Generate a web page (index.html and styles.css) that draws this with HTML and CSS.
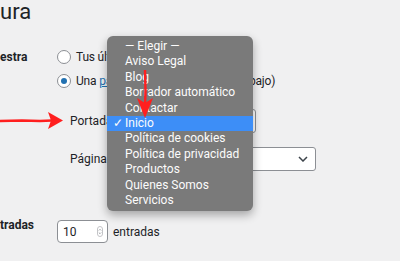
FILE: index.html
```html
<!DOCTYPE html>
<html lang="es">
<head>
  <meta charset="UTF-8" />
  <title>Ajustes de lectura</title>
  <link rel="stylesheet" href="styles.css">
</head>
<body>
  <div class="wrap">
    <h1>ura</h1>
    <div class="form-table">
      <div class="th">estra</div>
      <div class="td">
        <label class="radio-line"><span class="radio"></span>Tus últimas entradas</label>
        <label class="radio-line"><span class="radio checked"></span>Una&nbsp;<a href="#">página estática</a>&nbsp;(selecciona abajo)</label>
        <div class="sub-row">
          <span class="sub-label">Portada</span>
          <div class="select front">— Elegir —</div>
        </div>
        <div class="sub-row">
          <span class="sub-label">Página</span>
          <div class="select posts">
            <span>— Elegir —</span>
            <svg width="10" height="6" viewBox="0 0 10 6"><path d="M1 1l4 4 4-4" fill="none" stroke="#3c434a" stroke-width="1.5"/></svg>
          </div>
        </div>
      </div>
      <div class="th second">tradas</div>
      <div class="td second">
        <div class="number">
          <span>10</span>
          <svg class="spin" width="6" height="11" viewBox="0 0 6 11"><rect x="0.5" y="0.5" width="5" height="10" rx="2.5" fill="none" stroke="#c3c4c7"/><path d="M1.8 4.5l1.2-1.2 1.2 1.2M1.8 6.5l1.2 1.2 1.2-1.2" fill="none" stroke="#8c8f94" stroke-width="0.8"/></svg>
        </div>
        <span class="after">entradas</span>
      </div>
    </div>
  </div>

  <ul class="popup">
    <li>— Elegir —</li>
    <li>Aviso Legal</li>
    <li>Blog</li>
    <li>Borrador automático</li>
    <li>Contactar</li>
    <li class="selected"><span class="check">✓</span>Inicio</li>
    <li>Política de cookies</li>
    <li>Política de privacidad</li>
    <li>Productos</li>
    <li>Quienes Somos</li>
    <li>Servicios</li>
  </ul>

  <!-- flechas dibujadas encima de la captura -->
  <svg class="arrow arrow-left" width="66" height="20" viewBox="0 0 66 20">
    <path d="M0 9 L22 8.5 L40 9 L52 8.5" stroke="#ff1f1f" stroke-width="2.6" fill="none"/>
    <path d="M48 0 L63 8.5 L48 17 L51 8.5 Z" fill="#ff1f1f"/>
  </svg>
  <svg class="arrow arrow-down" width="20" height="52" viewBox="0 0 20 52">
    <path d="M10 0 L10.5 20 L10 38" stroke="#ff1f1f" stroke-width="2.4" fill="none"/>
    <path d="M2 28 L10 48 L18 28 L10 33 Z" fill="#ff1f1f"/>
  </svg>
</body>
</html>
```

FILE: styles.css
```css
body {
  margin: 0;
  background: #f0f0f1;
  color: #1d2327;
  font-family: Roboto, "Noto Sans", sans-serif;
  font-size: 12px;
  overflow: hidden;
}
h1 {
  font-size: 22px;
  font-weight: 400;
  line-height: 28px;
  margin: -2px 0 0 0;
}
.form-table {
  display: grid;
  grid-template-columns: 57px auto;
  margin-top: 19px;
}
.th {
  font-weight: 700;
  font-size: 12px;
  line-height: 24px;
}
.th.second {
  margin-top: 44px;
  line-height: 20px;
}
.td.second {
  margin-top: 49px;
  display: flex;
  align-items: center;
  gap: 5px;
}
.radio-line {
  display: flex;
  align-items: center;
  height: 24px;
  white-space: nowrap;
  letter-spacing: -0.2px;
}
.radio {
  width: 12px;
  height: 12px;
  border: 1px solid #8c8f94;
  border-radius: 50%;
  background: #fff;
  margin-right: 5px;
  position: relative;
}
.radio.checked::after {
  content: "";
  position: absolute;
  left: 3px;
  top: 3px;
  width: 6px;
  height: 6px;
  border-radius: 50%;
  background: #2271b1;
}
.radio-line a {
  color: #2271b1;
}
.sub-row {
  display: flex;
  align-items: center;
  height: 24px;
  margin-top: 16px;
  margin-left: 13px;
}
.sub-row + .sub-row {
  margin-top: 14px;
}
.sub-label {
  width: 38px;
}
.select {
  box-sizing: border-box;
  height: 24px;
  background: #fff;
  border: 1px solid #8c8f94;
  border-radius: 3px;
  padding: 0 7px 0 8px;
  display: flex;
  align-items: center;
  justify-content: space-between;
}
.select.front {
  width: 148px;
}
.select.posts {
  width: 208px;
}
.number {
  box-sizing: border-box;
  width: 51px;
  height: 23px;
  background: #fff;
  border: 1px solid #8c8f94;
  border-radius: 4px;
  padding: 0 4px 0 5px;
  display: flex;
  align-items: center;
  justify-content: space-between;
  font-size: 12px;
}
.popup {
  position: absolute;
  left: 107px;
  top: 36px;
  width: 146px;
  height: 175px;
  box-sizing: border-box;
  margin: 0;
  padding: 3px 0 0;
  list-style: none;
  background: #7a7a7a;
  border-radius: 6px;
  box-shadow: 0 4px 10px rgba(0, 0, 0, 0.32);
  color: #fcfcfc;
  font-size: 12px;
}
.popup li {
  height: 15.4px;
  line-height: 15.4px;
  padding-left: 18px;
  position: relative;
  white-space: nowrap;
}
.popup li.selected {
  background: #3d8ef7;
}
.check {
  position: absolute;
  left: 6px;
}
.arrow {
  position: absolute;
}
.arrow-left {
  left: 0;
  top: 112px;
}
.arrow-down {
  left: 135px;
  top: 70px;
}
```
